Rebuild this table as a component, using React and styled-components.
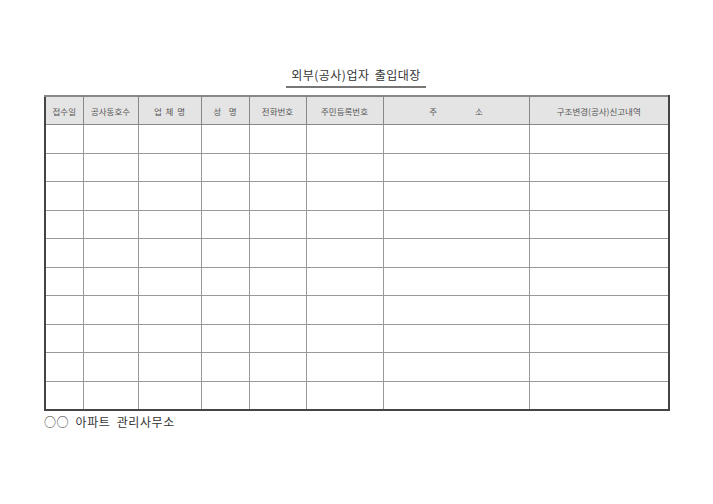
import React from 'react';
import styled, { createGlobalStyle } from 'styled-components';

const GlobalStyle = createGlobalStyle`
  html, body {
    margin: 0;
    padding: 0;
    background: #ffffff;
  }
  body {
    font-family: "Noto Sans CJK KR", "Noto Sans", sans-serif;
    color: #333;
  }
`;

const Page = styled.div`
  width: 713px;
  height: 504px;
  padding: 65px 0 0 44px;
  box-sizing: border-box;
`;

const TitleWrap = styled.div`
  width: 624px;
  display: flex;
  justify-content: center;
  margin-bottom: 7px;
`;

const Title = styled.h1`
  margin: 0;
  padding: 0 4px 1px;
  font-size: 12px;
  font-weight: normal;
  line-height: 20px;
  letter-spacing: 0.5px;
  word-spacing: 2px;
  color: #333;
  border-bottom: 2px solid #777;
  width: 132px;
  text-align: center;
`;

const Table = styled.table`
  width: 624px;
  border-collapse: collapse;
  table-layout: fixed;
  border: 2px solid #444;
  border-top-color: #888;
`;

const HeadCell = styled.th`
  height: 27px;
  padding: 0;
  background: #e4e4e4;
  border: 1px solid #888;
  font-size: 8.5px;
  font-weight: normal;
  color: #555;
  white-space: pre;
  text-align: center;
`;

const Cell = styled.td`
  height: 27.5px;
  padding: 0;
  border: 1px solid #999;
`;

const Footer = styled.div`
  margin-top: 3px;
  font-size: 12px;
  line-height: 16px;
  color: #333;
  letter-spacing: 0.6px;
  word-spacing: 3px;
  white-space: pre;
`;

const columns = [
  { label: '접수일', width: 38 },
  { label: '공사동호수', width: 55 },
  { label: '업  체  명', width: 63 },
  { label: '성    명', width: 48 },
  { label: '전화번호', width: 57 },
  { label: '주민등록번호', width: 77 },
  { label: '주                    소', width: 146 },
  { label: '구조변경(공사)신고내역', width: 140 },
];

const rows = Array.from({ length: 10 }, (_, i) => i);

const App = () => (
  <Page>
    <GlobalStyle />
    <TitleWrap>
      <Title>외부(공사)업자 출입대장</Title>
    </TitleWrap>
    <Table>
      <colgroup>
        {columns.map((c) => (
          <col key={c.label} style={{ width: c.width }} />
        ))}
      </colgroup>
      <thead>
        <tr>
          {columns.map((c) => (
            <HeadCell key={c.label}>{c.label}</HeadCell>
          ))}
        </tr>
      </thead>
      <tbody>
        {rows.map((r) => (
          <tr key={r}>
            {columns.map((c) => (
              <Cell key={c.label} />
            ))}
          </tr>
        ))}
      </tbody>
    </Table>
    <Footer>○○ 아파트 관리사무소</Footer>
  </Page>
);

export default App;
